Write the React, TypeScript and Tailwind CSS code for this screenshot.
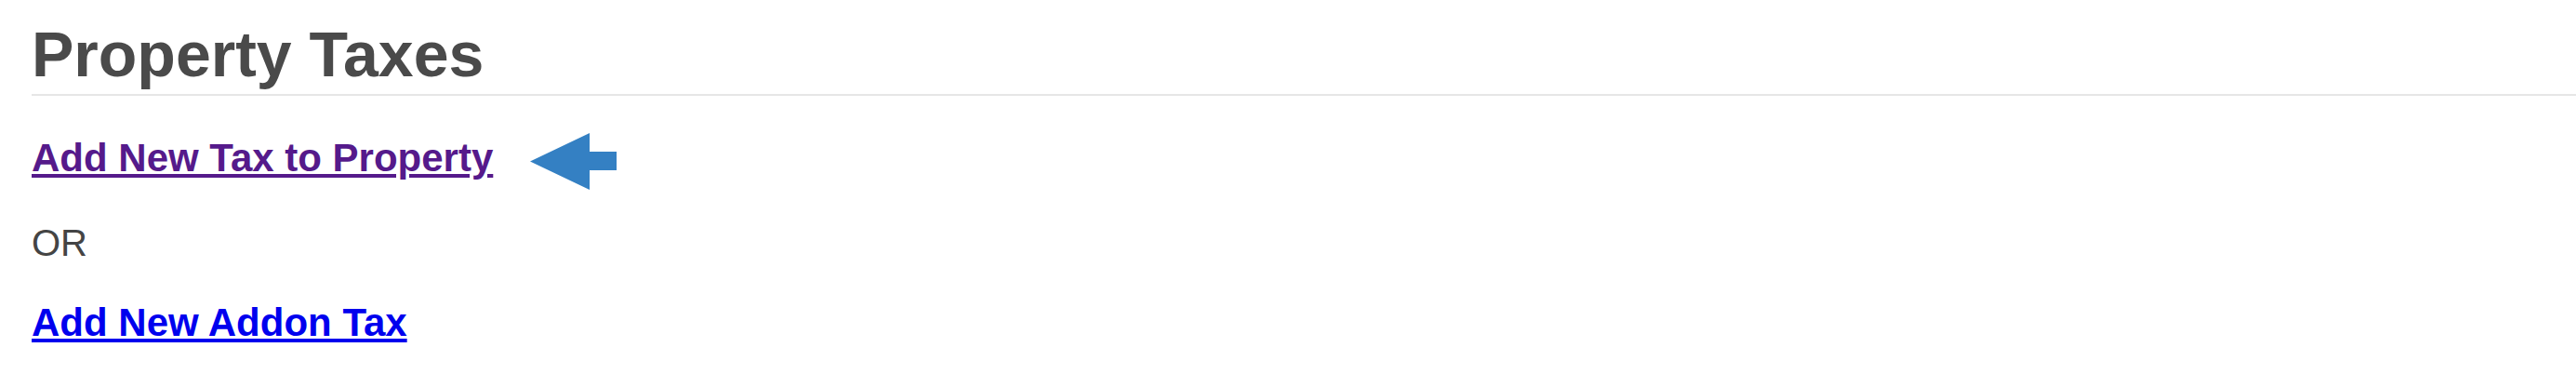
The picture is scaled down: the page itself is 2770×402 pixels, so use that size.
export default function App() {
  return (
    <div className="min-h-screen bg-white pl-[34px] pt-[24px] font-['Liberation_Sans',Arial,sans-serif]">
      <h2 className="border-b-2 border-[#e6e6e6] pb-[9px] text-[68px] font-bold leading-none text-[#4a4a4a]">
        Property Taxes
      </h2>
      <div className="mt-[46px] flex items-start">
        <a href="#" className="text-[42px] font-bold leading-none text-[#551a8b] underline">
          Add New Tax to Property
        </a>
        <svg
          className="ml-[40px] -mt-[6px] -mb-[13px]"
          width="93"
          height="61"
          viewBox="0 0 93 61"
        >
          <polygon points="0,30.5 64,0 64,20 93,20 93,40 64,40 64,61" fill="#3480c3" />
        </svg>
      </div>
      <p className="mt-[50px] text-[40px] leading-none text-[#444444]">OR</p>
      <div className="mt-[45px] flex">
        <a href="#" className="text-[42px] font-bold leading-none text-[#0000ee] underline">
          Add New Addon Tax
        </a>
      </div>
    </div>
  );
}
